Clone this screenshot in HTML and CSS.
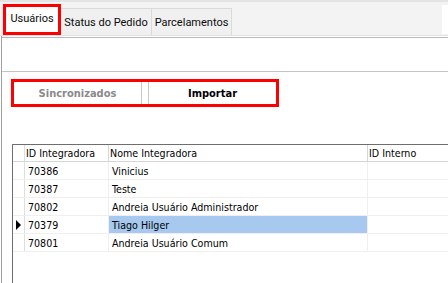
FILE: index.html
```html
<!DOCTYPE html>
<html>
<head>
<meta charset="utf-8">
<link rel="stylesheet" href="styles.css">
</head>
<body>
<div class="window">
  <div class="topstrip"></div>
  <div class="tabbar">
    <div class="tab active">Usuários</div>
    <div class="tab t2">Status do Pedido</div>
    <div class="tab t3">Parcelamentos</div>
    <div class="tabfill"></div>
    <div class="tabend"></div>
  </div>
  <div class="page">
    <div class="header-panel"></div>
    <div class="content">
      <div class="toolbar">
        <div class="btn disabled">Sincronizados</div>
        <div class="sep"></div>
        <div class="gap"></div>
        <div class="sep"></div>
        <div class="btn">Importar</div>
      </div>
      <div class="grid">
        <div class="row head">
          <div class="rh"></div>
          <div class="c c1">ID Integradora</div>
          <div class="c c2">Nome Integradora</div>
          <div class="c c3">ID Interno</div>
        </div>
        <div class="row">
          <div class="rh"></div>
          <div class="c c1">70386</div>
          <div class="c c2">Vinicius</div>
          <div class="c c3"></div>
        </div>
        <div class="row">
          <div class="rh"></div>
          <div class="c c1">70387</div>
          <div class="c c2">Teste</div>
          <div class="c c3"></div>
        </div>
        <div class="row">
          <div class="rh"></div>
          <div class="c c1">70802</div>
          <div class="c c2">Andreia Usuário Administrador</div>
          <div class="c c3"></div>
        </div>
        <div class="row current">
          <div class="rh"><span class="arrow"></span></div>
          <div class="c c1">70379</div>
          <div class="c c2 selected">Tiago Hilger</div>
          <div class="c c3"></div>
        </div>
        <div class="row">
          <div class="rh"></div>
          <div class="c c1">70801</div>
          <div class="c c2">Andreia Usuário Comum</div>
          <div class="c c3"></div>
        </div>
      </div>
    </div>
  </div>
</div>
</body>
</html>
```
FILE: styles.css
```css
* { box-sizing: border-box; }
html, body { margin: 0; padding: 0; background: #ffffff; }
.window {
  width: 448px;
  height: 283px;
  overflow: hidden;
  background: #ffffff;
  display: flex;
  flex-direction: column;
  font-family: "DejaVu Sans Condensed", "DejaVu Sans", sans-serif;
  font-size: 10.6px;
  color: #000;
}
.topstrip {
  height: 2px;
  background: #e4e4e4;
  flex: none;
}
.tabbar {
  height: 34px;
  flex: none;
  background: #f3f3f3;
  border-bottom: 1px solid #e2e2e2;
  display: flex;
  align-items: flex-end;
  padding-left: 3px;
}
.tab {
  height: 27px;
  border: 1px solid #dadada;
  border-bottom: none;
  border-left: none;
  background: #f0f0f0;
  display: flex;
  align-items: center;
  justify-content: center;
  font-family: Roboto, "Liberation Sans", sans-serif;
  font-size: 11px;
  color: #0b0b0b;
  white-space: nowrap;
  flex: none;
}
.tab.active {
  width: 58px;
  height: 31px;
  border: 3px solid #ff0000;
  background: #ffffff;
  padding-bottom: 3px;
}
.tab.t2 { width: 91px; padding-top: 1px; }
.tab.t3 { width: 80px; padding-top: 1px; }
.tabfill { flex: 1; }
.tabend {
  width: 6px;
  height: 29px;
  margin-bottom: 1px;
  background: #ffffff;
  flex: none;
}
.page {
  flex: 1;
  display: flex;
  flex-direction: column;
  border-left: 1px solid #a0a0a0;
  margin-left: 1px;
  padding-top: 1px;
}
.header-panel {
  height: 35px;
  flex: none;
  border-top: 1px solid #b9b9b9;
  border-bottom: 1px solid #c4c4c4;
  background: #fff;
}
.content {
  flex: 1;
  padding: 7px 0 0 9px;
}
.toolbar {
  display: flex;
  width: 268px;
  height: 28px;
  border: 3px solid #ff0000;
  align-items: stretch;
}
.btn {
  width: 127px;
  display: flex;
  align-items: center;
  justify-content: center;
  font-weight: bold;
  font-size: 11px;
  color: #000;
}
.btn.disabled { color: #8a8a8a; }
.sep { width: 1px; background: #c8c8c8; }
.gap { width: 6px; }
.grid {
  margin-top: 37px;
  margin-left: 1px;
  border-top: 1px solid #6e6e6e;
  border-left: 1px solid #6e6e6e;
  min-height: 160px;
}
.row {
  display: flex;
  height: 18px;
  border-bottom: 1px solid #efefef;
}
.row.head {
  height: 17px;
  border-bottom: 1px solid #d6d6d6;
}
.rh {
  width: 12px;
  flex: none;
  border-right: 1px solid #dedede;
  display: flex;
  align-items: center;
  padding-left: 3px;
}
.c {
  flex: none;
  border-right: 1px solid #efefef;
  display: flex;
  align-items: center;
  padding-left: 3px;
  white-space: nowrap;
}
.head .c { border-right-color: #d6d6d6; padding-left: 1px; }
.c1 { width: 84px; }
.c2 { width: 259px; }
.c3 { flex: 1; border-right: none; }
.selected { background: #a7c9ef; }
.arrow {
  width: 0;
  height: 0;
  border-top: 5px solid transparent;
  border-bottom: 5px solid transparent;
  border-left: 5px solid #000;
}
```
